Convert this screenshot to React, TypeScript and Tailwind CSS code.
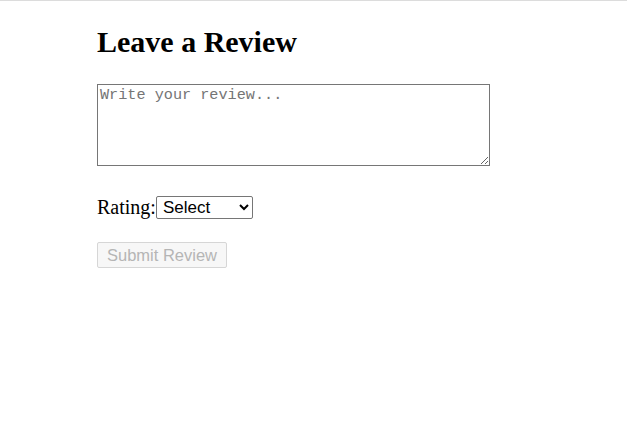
import { useState } from "react";

export default function App() {
  const [review, setReview] = useState("");
  const [rating, setRating] = useState("");

  return (
    <div className="min-h-[435px] w-full bg-white border-t border-[#dcdcdc] font-['Liberation_Serif',serif] text-black">
      <div className="pl-[97px] pt-[23px]">
        <h1 className="text-[30px] leading-[35px] font-bold">Leave a Review</h1>

        <textarea
          value={review}
          onChange={(e) => setReview(e.target.value)}
          placeholder="Write your review..."
          className="mt-[25px] block w-[393px] h-[82px] border border-[#767676] px-[2px] py-[1px] font-['Liberation_Mono',monospace] text-[15.2px] leading-[18px] placeholder:text-[#757575] resize"
        />

        <div className="mt-[30px] flex items-center h-[23px]">
          <label className="text-[20px] leading-[23px]">Rating:</label>
          <select
            value={rating}
            onChange={(e) => setRating(e.target.value)}
            className="w-[97px] h-[23px] border border-[#767676] rounded-[2px] font-['Liberation_Sans',sans-serif] text-[17px] leading-[19px] pl-[2px]"
          >
            <option value="">Select</option>
            <option value="1">1</option>
            <option value="2">2</option>
            <option value="3">3</option>
            <option value="4">4</option>
            <option value="5">5</option>
          </select>
        </div>

        <button
          disabled={!review.trim() || !rating}
          className="mt-[23px] block w-[130px] h-[26px] border border-[#d6d6d6] rounded-[2px] bg-[#f7f7f7] font-['Liberation_Sans',sans-serif] text-[16.5px] leading-[18px] text-[#b5b5b5]"
        >
          Submit Review
        </button>
      </div>
    </div>
  );
}
